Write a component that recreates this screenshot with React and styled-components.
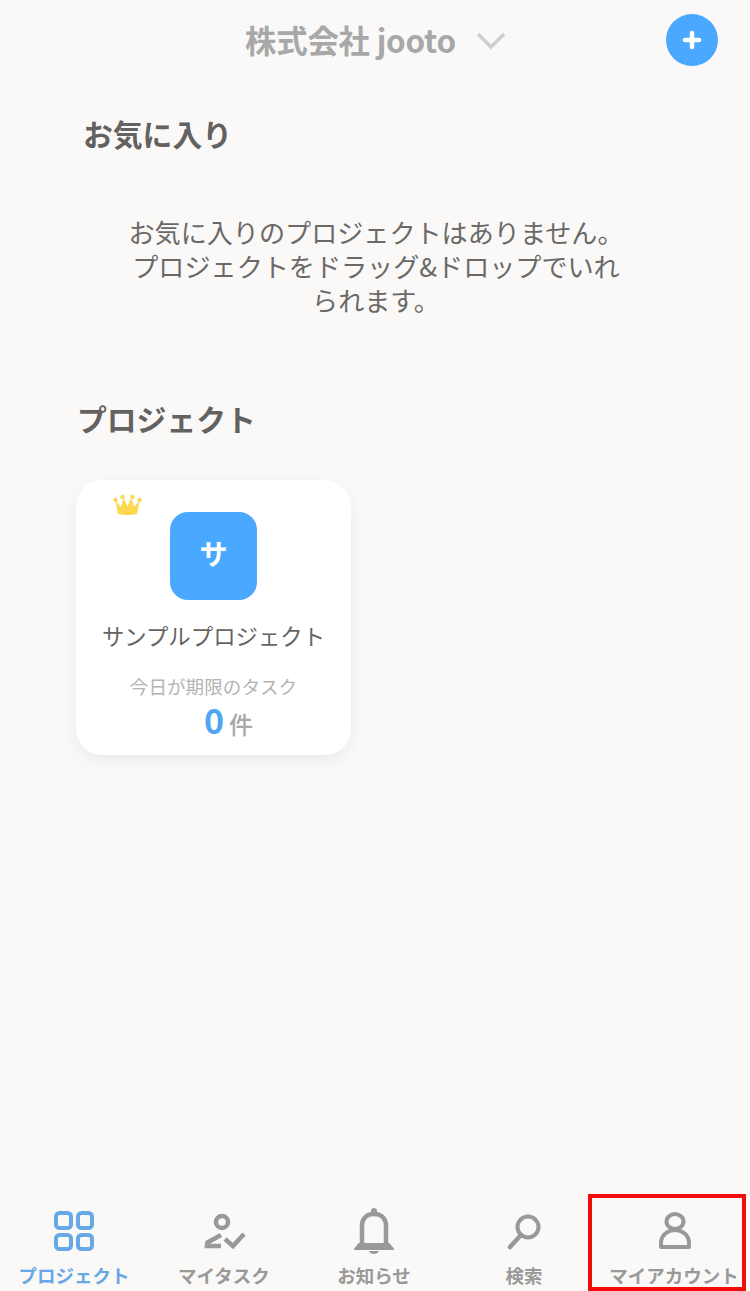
import React from "react";
import styled, { createGlobalStyle } from "styled-components";

const GlobalStyle = createGlobalStyle`
  html, body {
    margin: 0;
    padding: 0;
    background: #faf9f8;
  }
  * {
    box-sizing: border-box;
  }
`;

const Page = styled.div`
  position: relative;
  width: 750px;
  height: 1291px;
  overflow: hidden;
  display: flex;
  flex-direction: column;
  background: #faf9f8;
  font-family: "Noto Sans CJK JP", "Noto Sans", sans-serif;
  color: #5f5e5c;
`;

const Header = styled.header`
  height: 84px;
  flex: none;
  display: flex;
  align-items: center;
  padding: 0 32px 4px 245px;
`;

const Company = styled.div`
  font-size: 31.4px;
  font-weight: 700;
  letter-spacing: -0.2px;
  line-height: 40px;
  color: #a8a8a8;
`;

const Chevron = styled.svg`
  width: 30px;
  height: 20px;
  margin-left: 20px;
  margin-top: 2px;
`;

const AddButton = styled.button`
  width: 52px;
  height: 52px;
  margin-left: auto;
  padding: 0;
  border: none;
  border-radius: 50%;
  background: #4aa8ff;
  display: flex;
  align-items: center;
  justify-content: center;
`;

const Main = styled.main`
  flex: 1;
  display: flex;
  flex-direction: column;
  padding-top: 29px;
`;

const SectionTitle = styled.h2`
  margin: 0;
  padding-left: ${(p) => p.$left}px;
  font-size: 29.8px;
  line-height: 40px;
  font-weight: 700;
  color: #636260;
`;

const EmptyText = styled.p`
  width: 510px;
  margin: 62px 0 0 121px;
  font-size: 26.1px;
  line-height: 34px;
  text-align: center;
  color: #6a6967;
`;

const Projects = styled.section`
  margin-top: 81px;
`;

const Card = styled.article`
  position: relative;
  width: 275px;
  height: 275px;
  margin: 42px 0 0 76px;
  padding-top: 32px;
  border-radius: 26px;
  background: #fff;
  box-shadow: 0 6px 16px rgba(0, 0, 0, 0.06);
  display: flex;
  flex-direction: column;
  align-items: center;
`;

const Crown = styled.svg`
  position: absolute;
  left: 37px;
  top: 12px;
  width: 29px;
  height: 24px;
`;

const ProjectIcon = styled.div`
  width: 87px;
  height: 88px;
  border-radius: 18px;
  background: #4aa8ff;
  color: #fff;
  font-size: 28px;
  font-weight: 700;
  display: flex;
  align-items: center;
  justify-content: center;
  padding-bottom: 6px;
`;

const ProjectName = styled.div`
  margin-top: 19px;
  font-size: 22.4px;
  line-height: 32px;
  color: #666563;
  white-space: nowrap;
`;

const DueLabel = styled.div`
  margin-top: 22px;
  font-size: 18.6px;
  line-height: 26px;
  color: #b4b4b4;
  white-space: nowrap;
`;

const DueCount = styled.div`
  display: flex;
  align-items: baseline;
  gap: 5px;
  margin-top: 3px;
  padding-left: 30px;
  line-height: 36px;
`;

const Count = styled.span`
  font-size: 34px;
  font-weight: 700;
  color: #4fa6f2;
`;

const Unit = styled.span`
  font-size: 24px;
  font-weight: 500;
  color: #a8a8a8;
`;

const TabBar = styled.nav`
  height: 97px;
  flex: none;
  display: grid;
  grid-template-columns: repeat(5, 1fr);
`;

const Tab = styled.div`
  display: flex;
  flex-direction: column;
  align-items: center;
  padding-top: 14px;
  color: ${(p) => (p.$active ? "#66a9e6" : "#999")};
`;

const TabIcon = styled.svg`
  width: 52px;
  height: 52px;
  flex: none;
  overflow: visible;
`;

const TabLabel = styled.span`
  margin-top: 2px;
  margin-right: 2px;
  font-size: 18.5px;
  line-height: 26px;
  font-weight: 700;
  white-space: nowrap;
`;

const Highlight = styled.div`
  position: absolute;
  left: 588px;
  top: 1194px;
  width: 158px;
  height: 97px;
  border: 4px solid #f20d0d;
`;

const GridIcon = () => (
  <TabIcon viewBox="0 0 52 52" fill="none" stroke="currentColor" strokeWidth="4">
    <rect x="7" y="5" width="15" height="15" rx="3.5" />
    <rect x="29" y="5" width="14" height="15" rx="3.5" />
    <rect x="7" y="27" width="15" height="14" rx="3.5" />
    <rect x="29" y="27" width="14" height="14" rx="3.5" />
  </TabIcon>
);

const TaskIcon = () => (
  <TabIcon viewBox="0 0 52 52" fill="none" stroke="currentColor" strokeWidth="4.5">
    <circle cx="23" cy="14" r="6" />
    <path d="M22 27 L8.5 34.5 L8 38 H22" />
    <path d="M26 31 L34 38 L45 26" />
  </TabIcon>
);

const BellIcon = () => (
  <TabIcon viewBox="0 0 52 52" fill="none" stroke="currentColor" strokeWidth="4.5">
    <path d="M13 37 V18 C13 9 19 6 25 6 C31 6 37 9 37 18 V37" />
    <path d="M6 41 L10 36 H40 L44 41 Z" fill="currentColor" strokeWidth="2" strokeLinejoin="round" />
    <circle cx="25" cy="3" r="3" fill="currentColor" stroke="none" />
    <path d="M20 43 H30 C29 47 21 47 20 43 Z" fill="currentColor" stroke="none" />
  </TabIcon>
);

const SearchIcon = () => (
  <TabIcon viewBox="0 0 52 52" fill="none" stroke="currentColor" strokeWidth="4">
    <circle cx="29" cy="19" r="10.5" />
    <path d="M22 27 L11 39" strokeWidth="4.5" strokeLinecap="round" />
  </TabIcon>
);

const UserIcon = () => (
  <TabIcon viewBox="0 0 52 52" fill="none" stroke="currentColor" strokeWidth="4">
    <ellipse cx="26" cy="13.5" rx="8.5" ry="7.5" />
    <path d="M12 39 V35 C12 27 19 22 26 22 C33 22 40 27 40 35 V39 Z" strokeLinejoin="round" />
  </TabIcon>
);

const tabs = [
  { label: "プロジェクト", Icon: GridIcon, active: true },
  { label: "マイタスク", Icon: TaskIcon },
  { label: "お知らせ", Icon: BellIcon },
  { label: "検索", Icon: SearchIcon },
  { label: "マイアカウント", Icon: UserIcon },
];

export default function App() {
  return (
    <Page>
      <GlobalStyle />
      <Header>
        <Company>株式会社 jooto</Company>
        <Chevron viewBox="0 0 30 20" fill="none" stroke="#cfcfcf" strokeWidth="3.5">
          <path d="M2 3 L15 16 L28 3" />
        </Chevron>
        <AddButton aria-label="追加">
          <svg width="24" height="24" viewBox="0 0 24 24" fill="none" stroke="#fff" strokeWidth="4.5" strokeLinecap="round">
            <path d="M12 5 V19 M5 12 H19" />
          </svg>
        </AddButton>
      </Header>
      <Main>
        <SectionTitle $left={83}>お気に入り</SectionTitle>
        <EmptyText>
          お気に入りのプロジェクトはありません。プロジェクトをドラッグ&ドロップでいれられます。
        </EmptyText>
        <Projects>
          <SectionTitle $left={77}>プロジェクト</SectionTitle>
          <Card>
            <Crown viewBox="0 0 29 24" fill="#fbd84e">
              <path d="M2.5 9 L8 15 L10.5 6 L14.5 14 L18.5 6 L21 15 L26.5 9 L24 22 Q14.5 24 5 22 Z" />
              <circle cx="2.5" cy="8" r="2.2" />
              <circle cx="9.5" cy="5" r="2.2" />
              <circle cx="19.5" cy="5" r="2.2" />
              <circle cx="26.5" cy="8" r="2.2" />
            </Crown>
            <ProjectIcon>サ</ProjectIcon>
            <ProjectName>サンプルプロジェクト</ProjectName>
            <DueLabel>今日が期限のタスク</DueLabel>
            <DueCount>
              <Count>0</Count>
              <Unit>件</Unit>
            </DueCount>
          </Card>
        </Projects>
      </Main>
      <TabBar>
        {tabs.map(({ label, Icon, active }) => (
          <Tab key={label} $active={active}>
            <Icon />
            <TabLabel>{label}</TabLabel>
          </Tab>
        ))}
      </TabBar>
      <Highlight />
    </Page>
  );
}
